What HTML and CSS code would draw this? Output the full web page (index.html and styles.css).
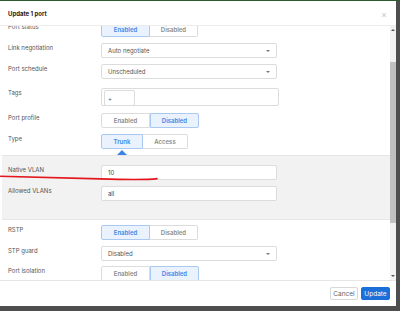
FILE: index.html
```html
<!DOCTYPE html>
<html lang="en">
<head>
    <meta charset="UTF-8">
    <meta name="viewport" content="width=device-width, initial-scale=1.0">
    <title>Update 1 port</title>
    <link rel="stylesheet" href="styles.css">
</head>
<body>
    <div class="backdrop">
        <div class="modal">
            <div class="modal-header">
                <span class="modal-title">Update 1 port</span>
                <span class="close">&times;</span>
            </div>

            <div class="modal-main">
                <div class="content">
                    <div class="form">
                        <div class="row">
                            <label class="label">Port status</label>
                            <div class="btn-group">
                                <span class="seg active">Enabled</span>
                                <span class="seg">Disabled</span>
                            </div>
                        </div>

                        <div class="row">
                            <label class="label">Link negotiation</label>
                            <div class="select">Auto negotiate<span class="caret"></span></div>
                        </div>

                        <div class="row row-wide">
                            <label class="label">Port schedule</label>
                            <div class="select">Unscheduled<span class="caret"></span></div>
                        </div>

                        <div class="row row-tags">
                            <label class="label">Tags</label>
                            <div class="tags">
                                <span class="tag-add">+</span>
                            </div>
                        </div>

                        <div class="row">
                            <label class="label">Port profile</label>
                            <div class="btn-group">
                                <span class="seg">Enabled</span>
                                <span class="seg active">Disabled</span>
                            </div>
                        </div>

                        <div class="row row-type">
                            <label class="label">Type</label>
                            <div class="type-wrap">
                                <div class="btn-group">
                                    <span class="seg seg-trunk active">Trunk</span>
                                    <span class="seg seg-access">Access</span>
                                </div>
                                <span class="pointer"></span>
                            </div>
                        </div>

                        <div class="trunk-panel">
                            <div class="row">
                                <label class="label">Native VLAN</label>
                                <div class="input">10</div>
                            </div>
                            <div class="row">
                                <label class="label">Allowed VLANs</label>
                                <div class="input">all</div>
                            </div>
                        </div>

                        <div class="row">
                            <label class="label">RSTP</label>
                            <div class="btn-group">
                                <span class="seg active">Enabled</span>
                                <span class="seg">Disabled</span>
                            </div>
                        </div>

                        <div class="row row-tight">
                            <label class="label">STP guard</label>
                            <div class="select">Disabled<span class="caret"></span></div>
                        </div>

                        <div class="row">
                            <label class="label">Port isolation</label>
                            <div class="btn-group">
                                <span class="seg">Enabled</span>
                                <span class="seg active">Disabled</span>
                            </div>
                        </div>
                    </div>
                </div>

                <div class="scrollbar">
                    <span class="sb-arrow sb-up"></span>
                    <div class="sb-track"><div class="sb-thumb"></div></div>
                    <span class="sb-arrow sb-down"></span>
                </div>
            </div>

            <div class="modal-footer">
                <button class="btn btn-cancel">Cancel</button>
                <button class="btn btn-primary">Update</button>
            </div>
        </div>

        <!-- hand-drawn mark on the screenshot -->
        <svg class="annotation" width="400" height="311" viewBox="0 0 400 311">
            <path d="M0 176.3 Q 55 177.6 100 178.9 T 157 178.6" fill="none" stroke="#e3161b" stroke-width="1.6" stroke-linecap="round"/>
        </svg>
    </div>
</body>
</html>
```

FILE: styles.css
```css
body {
    margin: 0;
    padding: 0;
    background-color: #4e4e4e;
    font-family: Inter, "Noto Sans", sans-serif;
}

.backdrop {
    position: relative;
    width: 400px;
    height: 311px;
    border-top: 1px solid #2f5a30;
    box-sizing: border-box;
}

.modal {
    width: 396px;
    height: 305px;
    background-color: #fff;
    display: flex;
    flex-direction: column;
}

.modal-header {
    height: 24px;
    border-bottom: 1px solid #ececec;
    display: flex;
    align-items: center;
    justify-content: space-between;
    padding: 0 9px 0 8px;
}

.modal-title {
    font-size: 6px;
    font-weight: 700;
    color: #222;
}

.close {
    font-size: 9px;
    color: #c8c8c8;
    margin-top: 2px;
}

.modal-main {
    flex: 1;
    display: flex;
    min-height: 0;
}

.content {
    flex: 1;
    overflow: hidden;
}

.form {
    margin-top: -4px;
}

.row {
    display: flex;
    align-items: flex-start;
    margin-bottom: 6px;
}

.row-wide {
    margin-bottom: 9px;
}

.row-tags {
    margin-bottom: 7px;
}

.row-tight {
    margin-bottom: 5px;
}

.row-type {
    margin-bottom: 0;
}

.label {
    width: 93px;
    padding-left: 8px;
    font-size: 6px;
    line-height: 9px;
    color: #555;
}

.btn-group {
    display: flex;
}

.seg {
    width: 47px;
    height: 13px;
    border: 1px solid #dcdcdc;
    display: flex;
    align-items: center;
    justify-content: center;
    font-size: 6px;
    font-weight: 600;
    color: #8a8a8a;
    background-color: #fff;
}

.seg + .seg {
    border-left: none;
}

.seg:first-child {
    border-radius: 2px 0 0 2px;
}

.seg:last-child {
    border-radius: 0 2px 2px 0;
}

.seg.active {
    background-color: #e9f2fd;
    border: 1px solid #a9c9f3;
    color: #3f86e6;
}

.seg-trunk {
    width: 40px;
}

.seg-access {
    width: 44px;
}

.type-wrap {
    display: flex;
    flex-direction: column;
}

.pointer {
    width: 0;
    height: 0;
    margin: 1px 0 0 16px;
    border-left: 5px solid transparent;
    border-right: 5px solid transparent;
    border-bottom: 5px solid #3b84e4;
}

.select,
.input {
    position: relative;
    width: 168px;
    height: 13px;
    border: 1px solid #dcdcdc;
    border-radius: 2px;
    padding-left: 6px;
    display: flex;
    align-items: center;
    font-size: 6px;
    color: #555;
    background-color: #fff;
}

.caret {
    position: absolute;
    right: 6px;
    top: 6px;
    width: 0;
    height: 0;
    border-left: 2px solid transparent;
    border-right: 2px solid transparent;
    border-top: 2px solid #777;
}

.input {
    color: #444;
}

.tags {
    width: 174px;
    height: 15px;
    border: 1px solid #dcdcdc;
    border-radius: 2px;
    padding: 1px 0 0 2px;
    background-color: #fff;
}

.tag-add {
    display: block;
    width: 26px;
    height: 14px;
    border: 1px solid #dcdcdc;
    border-radius: 2px;
    padding-left: 3px;
    font-size: 6px;
    line-height: 16px;
    color: #555;
}

.trunk-panel {
    margin: 0 0 5px 2px;
    padding: 9px 0 12px 0;
    background-color: #f2f2f2;
    border-top: 1px solid #e6e6e6;
    border-bottom: 1px solid #e6e6e6;
}

.trunk-panel .label {
    padding-left: 6px;
}

.scrollbar {
    width: 6px;
    background-color: #f1f1f1;
    display: flex;
    flex-direction: column;
    align-items: center;
}

.sb-arrow {
    width: 0;
    height: 0;
    border-left: 2px solid transparent;
    border-right: 2px solid transparent;
}

.sb-up {
    margin: 3px 0 4px;
    border-bottom: 2px solid #555;
}

.sb-down {
    margin: 3px 0 3px;
    border-top: 2px solid #555;
}

.sb-track {
    flex: 1;
    width: 100%;
    padding-top: 27px;
}

.sb-thumb {
    height: 161px;
    background-color: #c1c1c1;
}

.modal-footer {
    flex: none;
    height: 26px;
    border-top: 1px solid #e6e6e6;
    display: flex;
    align-items: flex-start;
    justify-content: flex-end;
    padding: 6px 6px 0 0;
    box-sizing: border-box;
    gap: 3px;
}

.btn {
    height: 13px;
    padding: 0;
    border-radius: 2px;
    font-family: Inter, "Noto Sans", sans-serif;
    font-size: 6.5px;
    cursor: pointer;
}

.btn-cancel {
    width: 28px;
    background-color: #fff;
    border: 1px solid #d8d8d8;
    color: #666;
}

.btn-primary {
    width: 29px;
    background-color: #1a6fd8;
    border: 1px solid #1a6fd8;
    color: #fff;
}

.annotation {
    position: absolute;
    left: 0;
    top: -1px;
    pointer-events: none;
}
```
